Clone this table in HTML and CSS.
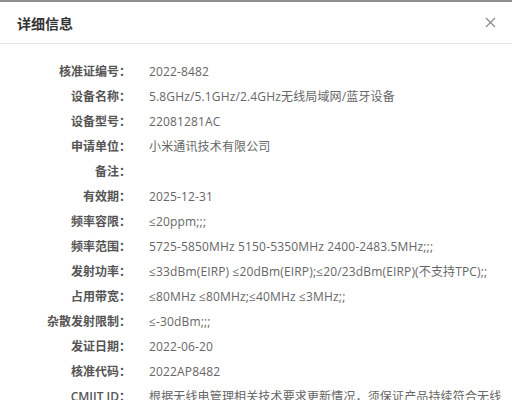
FILE: index.html
```html
<!DOCTYPE html>
<html lang="zh-CN">
<head>
    <meta charset="UTF-8">
    <meta name="viewport" content="width=device-width, initial-scale=1.0">
    <title>详细信息</title>
    <link rel="stylesheet" href="styles.css">
</head>

<body>
    <div class="backdrop-edge"></div>
    <div class="dialog">
        <div class="dialog-header">
            <h2>详细信息</h2>
            <span class="close-button">
                <svg width="11" height="11" viewBox="0 0 11 11">
                    <path d="M1 1 L10 10 M10 1 L1 10" stroke="#8c8c8c" stroke-width="1.3" fill="none"/>
                </svg>
            </span>
        </div>

        <div class="dialog-body">
            <div class="info-row"><span class="label">核准证编号：</span><span class="value">2022-8482</span></div>
            <div class="info-row"><span class="label">设备名称：</span><span class="value">5.8GHz/5.1GHz/2.4GHz无线局域网/蓝牙设备</span></div>
            <div class="info-row"><span class="label">设备型号：</span><span class="value">22081281AC</span></div>
            <div class="info-row"><span class="label">申请单位：</span><span class="value">小米通讯技术有限公司</span></div>
            <div class="info-row"><span class="label">备注：</span><span class="value"></span></div>
            <div class="info-row"><span class="label">有效期：</span><span class="value">2025-12-31</span></div>
            <div class="info-row"><span class="label">频率容限：</span><span class="value">≤20ppm;;;</span></div>
            <div class="info-row"><span class="label">频率范围：</span><span class="value">5725-5850MHz 5150-5350MHz 2400-2483.5MHz;;;</span></div>
            <div class="info-row"><span class="label">发射功率：</span><span class="value">≤33dBm(EIRP) ≤20dBm(EIRP);≤20/23dBm(EIRP)(不支持TPC);;</span></div>
            <div class="info-row"><span class="label">占用带宽：</span><span class="value">≤80MHz ≤80MHz;≤40MHz ≤3MHz;;</span></div>
            <div class="info-row"><span class="label">杂散发射限制：</span><span class="value">≤-30dBm;;;</span></div>
            <div class="info-row"><span class="label">发证日期：</span><span class="value">2022-06-20</span></div>
            <div class="info-row"><span class="label">核准代码：</span><span class="value">2022AP8482</span></div>
            <div class="info-row"><span class="label">CMIIT ID：</span><span class="value">根据无线电管理相关技术要求更新情况，须保证产品持续符合无线电管理相关技术要求。</span></div>
        </div>
    </div>
</body>
</html>
```

FILE: styles.css
```css
body {
    margin: 0;
    background-color: #ffffff;
    font-family: "Open Sans", "Noto Sans CJK SC", sans-serif;
    color: #555;
}

.backdrop-edge {
    height: 2px;
    background-color: #8f8f8f;
}

.dialog {
    background-color: #ffffff;
}

.dialog-header {
    display: flex;
    justify-content: space-between;
    align-items: center;
    height: 41px;
    padding: 0 16px 0 17px;
    border-bottom: 1px solid #e6e6e6;
}

.dialog-header h2 {
    margin: 0;
    font-size: 14px;
    font-weight: bold;
    color: #333;
}

.close-button {
    display: flex;
    cursor: pointer;
}

.dialog-body {
    padding: 15px 8px 0 0;
}

.info-row {
    display: grid;
    grid-template-columns: 131px 1fr;
    column-gap: 18px;
    line-height: 25px;
    font-size: 12px;
}

.label {
    text-align: right;
    font-weight: 600;
    color: #555;
}

.value {
    color: #666;
    letter-spacing: 0.15px;
}
```
